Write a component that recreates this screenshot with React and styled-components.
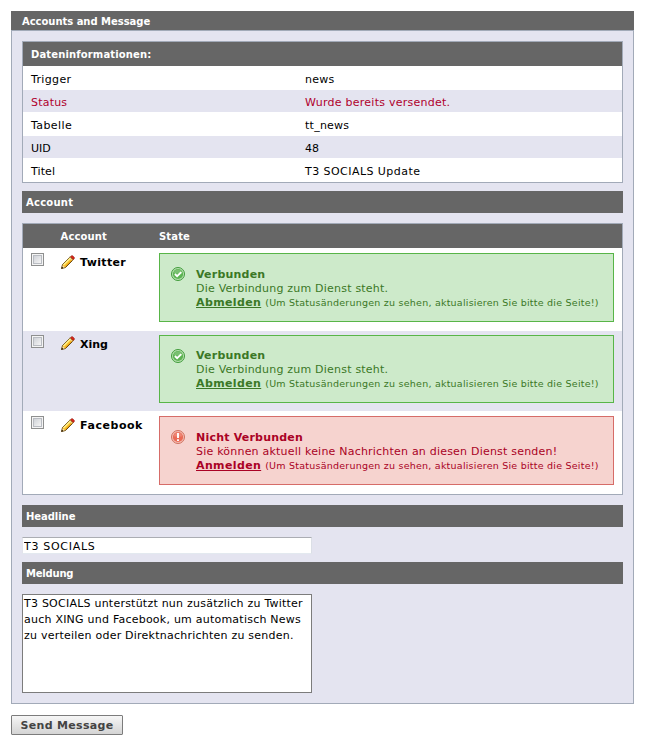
import React from "react";
import styled, { createGlobalStyle, css } from "styled-components";

const GlobalStyle = createGlobalStyle`
  *, *::before, *::after { box-sizing: border-box; }
  body {
    margin: 0;
    background: #fff;
    color: #000;
    font-family: Verdana, "DejaVu Sans", sans-serif;
    font-size: 11px;
    line-height: 14px;
  }
`;

const Page = styled.main`
  width: 656px;
  padding: 11px 22px 10px 11px;
`;

const PanelTitle = styled.h1`
  height: 19px;
  margin: 0;
  padding: 0 11px;
  background: #666;
  color: #fff;
  font-size: 10px;
  line-height: 21px;
  letter-spacing: -0.03px;
`;

const PanelBody = styled.section`
  height: 674px;
  padding: 10px;
  border: 1px solid #a2aab8;
  background: #e4e4f0;
`;

const Frame = styled.div`
  border: 1px solid #a2aab8;
  background: #fff;
`;

const HeadRow = styled.div`
  display: grid;
  grid-template-columns: ${(p) => p.$columns || "1fr"};
  height: 24px;
  padding-left: 8px;
  background: #666;
  color: #fff;
  font-size: 10px;
  font-weight: bold;
  line-height: 25px;
  letter-spacing: 0.14px;
`;

const InfoRow = styled.div`
  display: grid;
  grid-template-columns: 274px 1fr;
  height: 24px;
  padding-left: 8px;
  line-height: 28px;
  color: ${(p) => (p.$alert ? "#b0002d" : "#000")};

  &:nth-child(odd) {
    height: 22px;
    line-height: 26px;
    background: #e4e4f0;
  }
`;

const SectionBar = styled.h2`
  height: 22px;
  margin: ${(p) => p.$margin};
  padding: 0 4px;
  background: #666;
  color: #fff;
  font-size: 10px;
  line-height: 23px;
  letter-spacing: ${(p) => p.$track || 0}px;
`;

const Track = styled.span`
  letter-spacing: ${(p) => p.$by || 0}px;
  white-space: nowrap;
`;

const AccountRow = styled.div`
  display: grid;
  grid-template-columns: 30px 98px 455px;
  align-items: start;
  height: ${(p) => (p.$striped ? 80 : 83)}px;
  padding: ${(p) => p.$top}px 0 0 8px;
  background: ${(p) => (p.$striped ? "#e4e4f0" : "#fff")};
`;

const Check = styled.input`
  appearance: none;
  width: 13px;
  height: 13px;
  margin: 0;
  border: 1px solid #8e8f8f;
  background: linear-gradient(135deg, #c4c8cf, #f4f4f4 80%);
  box-shadow: inset 0 0 0 1px #f4f4f4, inset 0 0 0 2px #b9bcc2;
`;

const AccountName = styled.div`
  display: flex;
  align-items: flex-start;
  gap: 5px;
  padding-top: ${(p) => p.$top}px;
  font-weight: bold;
  line-height: 16px;
  white-space: nowrap;
`;

const NameText = styled(Track)`
  padding-top: ${(p) => p.$drop}px;
`;

const tones = {
  ok: css`
    border-color: #58b548;
    background: #cdeaca;
    color: #3b7826;
  `,
  error: css`
    border-color: #d66c68;
    background: #f6d3cf;
    color: #aa0225;
  `,
};

const StatusBox = styled.div`
  display: flex;
  gap: 11px;
  height: ${(p) => p.$height}px;
  padding: 13px 0 0 11px;
  border: 1px solid;
  ${(p) => tones[p.$tone]}

  svg { flex: none; }
`;

const StatusText = styled.div`
  padding-top: ${(p) => p.$drop}px;
  white-space: nowrap;
`;

const StatusLine = styled.div`
  height: 14px;
  font-weight: ${(p) => (p.$strong ? "bold" : "normal")};
  letter-spacing: 0.21px;
`;

const StatusLink = styled.a`
  color: inherit;
  font-weight: bold;
  letter-spacing: 0.37px;
  text-decoration: underline;
`;

const Note = styled.span`
  margin-left: 4px;
  font-size: 9.5px;
  letter-spacing: 0.23px;
`;

const HeadlineInput = styled.input`
  display: block;
  width: 290px;
  height: 17px;
  margin: 0;
  padding: 1px 1px 0;
  border: 1px solid;
  border-color: #abadb3 #dbdfe6 #e3e9ef #e2e3ea;
  background: #fff;
  color: #000;
  font: inherit;
  letter-spacing: 0.7px;
`;

const MessageArea = styled.textarea`
  display: block;
  width: 290px;
  height: 99px;
  margin: 0;
  padding: 1px 1px 0;
  overflow: hidden;
  resize: none;
  border: 1px solid #7c7c7c;
  background: #fff;
  color: #000;
  font: inherit;
  line-height: 16px;
  letter-spacing: 0.23px;
`;

const SendButton = styled.button`
  display: block;
  width: 112px;
  height: 20px;
  margin-top: 11px;
  padding: 1px 0 0;
  border: 1px solid #7c7c7c;
  border-radius: 1px;
  background: linear-gradient(#f6f6f6, #d4d4d4);
  color: #434343;
  font: bold 11px/17px Verdana, "DejaVu Sans", sans-serif;
  letter-spacing: 0.33px;
  white-space: nowrap;
`;

const PencilIcon = () => (
  <svg width="14" height="14" viewBox="0 0 14 14" aria-hidden="true">
    <path d="M.5 13.5 1.5 9.5 9.3 1.7 12.3 4.7 4.5 12.5Z" fill="#f9c22e" stroke="#5b3d08" strokeWidth=".9" />
    <path d="M2.5 10 9.6 2.9" stroke="#fff08a" strokeWidth="1.5" />
    <path d="M4.3 11.6 11.1 4.8" stroke="#eb9c10" strokeWidth="1" />
    <path d="M1 13 1.8 10.2 3.8 12.2Z" fill="#fbe3b5" />
    <path d="M.3 13.7 1 11.6 2.4 13Z" fill="#241700" />
    <path d="M9.5 1.8 10.7.7h.9L13.3 2.4v.9L12.2 4.5Z" fill="#dc2317" stroke="#8c1a10" strokeWidth=".6" />
    <path d="M8.5 2.8 11.2 5.5" stroke="#e3dcc4" strokeWidth=".9" />
  </svg>
);

const StateIcon = ({ tone }) => {
  const ok = tone === "ok";
  return (
    <svg width="14" height="14" viewBox="0 0 14 14" aria-hidden="true">
      <circle cx="7" cy="7" r="6.5" fill={ok ? "#b9e0b2" : "#f3bdb2"} stroke={ok ? "#3f9b3a" : "#d0705f"} />
      <circle cx="7" cy="7" r="5.1" fill={ok ? "#5cb352" : "#ea6a56"} />
      <path d="M3 6.5a4 4 0 0 1 8 0Z" fill="#fff" opacity=".18" />
      {ok ? (
        <path d="m3.9 7 2.2 2.2 4.2-4.1" fill="none" stroke="#fff" strokeWidth="1.9" />
      ) : (
        <path d="M7 3v5M7 9.2V11" fill="none" stroke="#fff" strokeWidth="1.9" />
      )}
    </svg>
  );
};

const info = [
  { label: "Trigger", labelTrack: 0.35, value: "news", track: 0.25 },
  { label: "Status", labelTrack: 0.2, value: "Wurde bereits versendet.", track: 0.25, alert: true },
  { label: "Tabelle", labelTrack: 0.4, value: "tt_news", track: 0.25 },
  { label: "UID", value: "48" },
  { label: "Titel", labelTrack: 0.1, value: "T3 SOCIALS Update", track: 0.45 },
];

const connected = {
  tone: "ok",
  title: "Verbunden",
  text: "Die Verbindung zum Dienst steht.",
  action: "Abmelden",
};

const accounts = [
  { name: "Twitter", track: 0.35, top: 5, height: 69, nameTop: 2, nameDrop: 0, drop: 1, ...connected },
  { name: "Xing", top: 4, height: 68, nameTop: 1, nameDrop: 1, drop: 0, striped: true, ...connected },
  {
    name: "Facebook",
    track: 0.55,
    top: 5,
    height: 69,
    nameTop: 2,
    nameDrop: 0,
    drop: 1,
    tone: "error",
    title: "Nicht Verbunden",
    text: "Sie können aktuell keine Nachrichten an diesen Dienst senden!",
    action: "Anmelden",
  },
];

export default function App() {
  return (
    <>
      <GlobalStyle />
      <Page>
        <PanelTitle>Accounts and Message</PanelTitle>
        <PanelBody>
          <Frame>
            <HeadRow>Dateninformationen:</HeadRow>
            {info.map((row) => (
              <InfoRow key={row.label} $alert={row.alert}>
                <Track $by={row.labelTrack}>{row.label}</Track>
                <Track $by={row.track}>{row.value}</Track>
              </InfoRow>
            ))}
          </Frame>
          <SectionBar $margin="8px 0 10px" $track={0.25}>Account</SectionBar>
          <Frame>
            <HeadRow $columns="29.5px 98.5px 1fr">
              <span />
              <span>Account</span>
              <span>State</span>
            </HeadRow>
            {accounts.map((a) => (
              <AccountRow key={a.name} $top={a.top} $striped={a.striped}>
                <Check type="checkbox" aria-label={a.name} />
                <AccountName $top={a.nameTop}>
                  <PencilIcon />
                  <NameText $by={a.track} $drop={a.nameDrop}>{a.name}</NameText>
                </AccountName>
                <StatusBox $tone={a.tone} $height={a.height}>
                  <StateIcon tone={a.tone} />
                  <StatusText $drop={a.drop}>
                    <StatusLine $strong>{a.title}</StatusLine>
                    <StatusLine>{a.text}</StatusLine>
                    <StatusLine>
                      <StatusLink>{a.action}</StatusLink>
                      <Note>(Um Statusänderungen zu sehen, aktualisieren Sie bitte die Seite!)</Note>
                    </StatusLine>
                  </StatusText>
                </StatusBox>
              </AccountRow>
            ))}
          </Frame>
          <SectionBar $margin="10px 0" $track={-0.05}>Headline</SectionBar>
          <HeadlineInput defaultValue="T3 SOCIALS" aria-label="Headline" />
          <SectionBar $margin="8px 0 10px" $track={-0.2}>Meldung</SectionBar>
          <MessageArea
            aria-label="Meldung"
            defaultValue={
              "T3 SOCIALS unterstützt nun zusätzlich zu Twitter\nauch XING und Facebook, um automatisch News\nzu verteilen oder Direktnachrichten zu senden."
            }
          />
        </PanelBody>
        <SendButton type="button">Send Message</SendButton>
      </Page>
    </>
  );
}
